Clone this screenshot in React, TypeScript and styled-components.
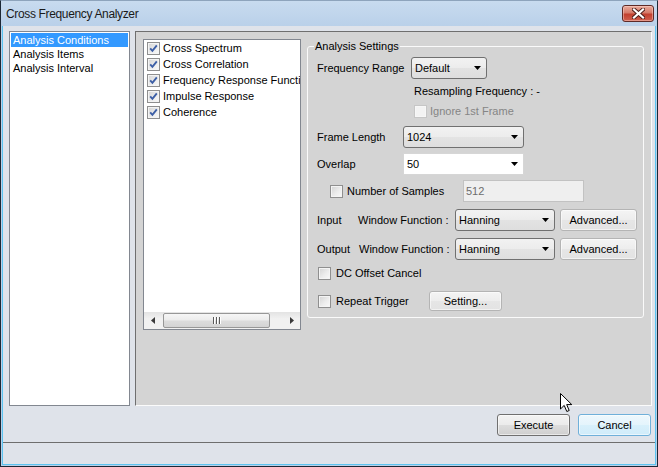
import React from 'react';
import styled, { createGlobalStyle } from 'styled-components';

const Global = createGlobalStyle`
  html, body { margin: 0; padding: 0; background: #fff; }
  body { font-family: "Liberation Sans", Arial, sans-serif; font-size: 11px; color: #000; }
  * { box-sizing: border-box; }
`;

const Window = styled.div`
  position: relative;
  width: 658px;
  height: 467px;
  border: 1px solid #1c2835;
  border-top-color: #8ea4bc;
  background: linear-gradient(#c8dbef, #b9d0e9 26px, #b9d0e9);
  display: flex;
  flex-direction: column;
  overflow: hidden;
`;

const TitleBar = styled.div`
  height: 25px;
  flex: none;
  display: flex;
  align-items: center;
  justify-content: space-between;
  padding: 0 3px 0 5px;
`;

const Title = styled.span`
  font-size: 12px;
  color: #1a1a1a;
  letter-spacing: -0.35px;
`;

const CloseButton = styled.div`
  width: 32px;
  height: 17px;
  border: 1px solid #5e2a27;
  border-radius: 3px;
  background: linear-gradient(#e9ab9c, #d67b6a 45%, #c2402f 55%, #d0604f);
  box-shadow: inset 0 0 0 1px rgba(255, 220, 210, 0.45);
  display: flex;
  align-items: center;
  justify-content: center;
`;

const Client = styled.div`
  flex: 1;
  margin: 0 1px 1px;
  border: 1px solid #5cc4f0;
  border-top: none;
  background: #dfe3ea;
  display: flex;
  flex-direction: column;
`;

const Main = styled.div`
  flex: none;
  height: 380px;
  display: flex;
  gap: 5px;
  padding: 5px 3px 0 6px;
`;

const NavList = styled.div`
  width: 121px;
  height: 375px;
  border: 1px solid #828790;
  background: #fff;
  padding: 1px;
`;

const NavItem = styled.div<{ $selected?: boolean }>`
  height: 14px;
  line-height: 14px;
  padding-left: 2px;
  white-space: nowrap;
  background: ${(p) => (p.$selected ? '#3399ff' : 'transparent')};
  color: ${(p) => (p.$selected ? '#fff' : '#000')};
`;

const Panel = styled.div`
  width: 517px;
  height: 375px;
  border: 1px solid;
  border-color: #6f6f6f #fbfbfb #fbfbfb #6f6f6f;
  background: #d4d4d4;
  display: flex;
  align-items: flex-start;
  gap: 6px;
  padding: 7px 0 0 7px;
`;

const CheckListBox = styled.div`
  width: 158px;
  height: 291px;
  border: 1px solid #828790;
  background: #fff;
  display: flex;
  flex-direction: column;
`;

const CheckItems = styled.div`
  flex: 1;
  overflow: hidden;
`;

const CheckItem = styled.div`
  height: 16px;
  display: flex;
  align-items: center;
  gap: 3px;
  padding-left: 3px;
  white-space: nowrap;
`;

const HScroll = styled.div`
  flex: none;
  height: 17px;
  display: flex;
  align-items: center;
  background: linear-gradient(#e3e3e3, #f1f1f1 40%, #f1f1f1);
`;

const ScrollArrow = styled.div`
  width: 17px;
  height: 17px;
  display: flex;
  align-items: center;
  justify-content: center;
  &:last-child { margin-left: auto; }
`;

const Thumb = styled.div`
  width: 107px;
  height: 15px;
  margin-left: 2px;
  border: 1px solid #979797;
  border-radius: 2px;
  background: linear-gradient(#f6f6f6, #ececec 45%, #dcdcdc 55%, #d4d4d4);
  display: flex;
  align-items: center;
  justify-content: center;
  gap: 2px;
`;

const Grip = styled.span`
  width: 1px;
  height: 7px;
  background: #5a5a5a;
  box-shadow: 1px 0 0 #fff;
`;

const GroupBox = styled.div`
  position: relative;
  margin-top: 7px;
  width: 337px;
  height: 272px;
  border: 1px solid #fafafa;
  border-radius: 3px;
`;

const Legend = styled.span`
  position: absolute;
  top: -8px;
  left: 6px;
  padding: 0 1px;
  line-height: 14px;
  background: #d4d4d4;
`;

const Row = styled.div<{ $mt: number; $h: number; $pl: number }>`
  display: flex;
  align-items: center;
  margin-top: ${(p) => p.$mt}px;
  height: ${(p) => p.$h}px;
  padding-left: ${(p) => p.$pl}px;
  white-space: nowrap;
`;

const Label = styled.span<{ $w?: number; $muted?: boolean }>`
  flex: none;
  width: ${(p) => (p.$w ? `${p.$w}px` : 'auto')};
  color: ${(p) => (p.$muted ? '#858585' : '#000')};
  white-space: nowrap;
`;

const CheckPair = styled.div<{ $gap: number }>`
  display: flex;
  align-items: center;
  gap: ${(p) => p.$gap}px;
`;

const Combo = styled.div<{ $w: number; $editable?: boolean }>`
  flex: none;
  width: ${(p) => p.$w}px;
  height: 22px;
  display: flex;
  align-items: center;
  justify-content: space-between;
  padding: 0 5px 0 3px;
  border: 1px solid ${(p) => (p.$editable ? '#d6d6d6' : '#707070')};
  border-radius: ${(p) => (p.$editable ? '0' : '3px')};
  background: ${(p) =>
    p.$editable ? '#fff' : 'linear-gradient(#f2f2f2, #ececec 50%, #e3e3e3 50%, #dedede)'};
`;

const TextBox = styled.div<{ $w: number }>`
  flex: none;
  width: ${(p) => p.$w}px;
  height: 22px;
  display: flex;
  align-items: center;
  padding-left: 2px;
  border: 1px solid #c2c2c2;
  background: #efefef;
  color: #6d6d6d;
`;

const PushButton = styled.div<{ $w: number; $h: number; $variant?: 'light' | 'default' | 'focus' }>`
  flex: none;
  width: ${(p) => p.$w}px;
  height: ${(p) => p.$h}px;
  display: flex;
  align-items: center;
  justify-content: center;
  border-radius: 3px;
  border: 1px solid
    ${(p) => (p.$variant === 'focus' ? '#6fb0da' : p.$variant === 'light' ? '#b4b4b4' : '#707070')};
  background: ${(p) =>
    p.$variant === 'focus'
      ? 'linear-gradient(#eef8fd, #e4f4fc 50%, #d8f0fb 50%, #d0ecfa)'
      : p.$variant === 'light'
      ? 'linear-gradient(#f4f4f4, #ededed 50%, #e6e6e6 50%, #e3e3e3)'
      : 'linear-gradient(#f3f3f3, #ebebeb 50%, #dddddd 50%, #cfcfcf)'};
  box-shadow: inset 0 0 0 1px rgba(255, 255, 255, 0.55);
`;

const Gap = styled.span<{ $w: number }>`
  flex: none;
  width: ${(p) => p.$w}px;
`;

const BottomBar = styled.div`
  flex: none;
  display: flex;
  justify-content: flex-end;
  gap: 8px;
  padding-right: 4px;
  margin-top: 8px;
`;

const Separator = styled.div`
  flex: none;
  margin-top: 6px;
  height: 1px;
  background: #6e6e6e;
`;

const StatusBar = styled.div`
  flex: 1;
`;

const Pointer = styled.svg`
  position: absolute;
  left: 559px;
  top: 392px;
`;

const Box = styled.span<{ $disabled?: boolean }>`
  flex: none;
  width: 13px;
  height: 13px;
  display: block;
  border: 1px solid ${(p) => (p.$disabled ? '#c6c6c6' : '#8f8f8f')};
  background: ${(p) =>
    p.$disabled ? '#f3f3f3' : 'linear-gradient(135deg, #d3d3d3 0%, #ececec 55%, #fafafa 100%)'};
  box-shadow: inset 0 0 0 1px ${(p) => (p.$disabled ? '#f7f7f7' : '#f4f4f4')};
`;

const CheckBox: React.FC<{ checked?: boolean; disabled?: boolean }> = ({ checked, disabled }) => (
  <Box $disabled={disabled}>
    {checked && (
      <svg width="11" height="11" viewBox="0 0 11 11" style={{ display: 'block' }}>
        <path d="M2.2 5.4 L4.4 7.8 L8.8 2.4" fill="none" stroke="#3d5fa6" strokeWidth="1.9" />
      </svg>
    )}
  </Box>
);

const DownArrow = () => (
  <svg width="7" height="4" viewBox="0 0 7 4">
    <path d="M0 0 H7 L3.5 4 Z" fill="#000" />
  </svg>
);

const App: React.FC = () => (
  <>
    <Global />
    <Window>
      <TitleBar>
        <Title>Cross Frequency Analyzer</Title>
        <CloseButton>
          <svg width="13" height="11" viewBox="0 0 13 11">
            <path d="M2 1.5 L11 9.5 M11 1.5 L2 9.5" stroke="#4a1c18" strokeWidth="4" strokeLinecap="square" />
            <path d="M2 1.5 L11 9.5 M11 1.5 L2 9.5" stroke="#fff" strokeWidth="2.2" strokeLinecap="square" />
          </svg>
        </CloseButton>
      </TitleBar>
      <Client>
        <Main>
          <NavList>
            <NavItem $selected>Analysis Conditions</NavItem>
            <NavItem>Analysis Items</NavItem>
            <NavItem>Analysis Interval</NavItem>
          </NavList>
          <Panel>
            <CheckListBox>
              <CheckItems>
                {['Cross Spectrum', 'Cross Correlation', 'Frequency Response Function', 'Impulse Response', 'Coherence'].map(
                  (t) => (
                    <CheckItem key={t}>
                      <CheckBox checked />
                      <span>{t}</span>
                    </CheckItem>
                  )
                )}
              </CheckItems>
              <HScroll>
                <ScrollArrow>
                  <svg width="4" height="7" viewBox="0 0 4 7">
                    <path d="M4 0 V7 L0 3.5 Z" fill="#3a3a3a" />
                  </svg>
                </ScrollArrow>
                <Thumb>
                  <Grip />
                  <Grip />
                  <Grip />
                </Thumb>
                <ScrollArrow>
                  <svg width="4" height="7" viewBox="0 0 4 7">
                    <path d="M0 0 V7 L4 3.5 Z" fill="#3a3a3a" />
                  </svg>
                </ScrollArrow>
              </HScroll>
            </CheckListBox>
            <GroupBox>
              <Legend>Analysis Settings</Legend>
              <Row $mt={10} $h={22} $pl={9}>
                <Label $w={94}>Frequency Range</Label>
                <Combo $w={76}>
                  <span>Default</span>
                  <DownArrow />
                </Combo>
              </Row>
              <Row $mt={5} $h={14} $pl={106}>
                <Label>Resampling Frequency : -</Label>
              </Row>
              <Row $mt={6} $h={14} $pl={106}>
                <CheckPair $gap={3}>
                  <CheckBox disabled />
                  <Label $muted>Ignore 1st Frame</Label>
                </CheckPair>
              </Row>
              <Row $mt={8} $h={22} $pl={9}>
                <Label $w={86}>Frame Length</Label>
                <Combo $w={121}>
                  <span>1024</span>
                  <DownArrow />
                </Combo>
              </Row>
              <Row $mt={5} $h={22} $pl={9}>
                <Label $w={86}>Overlap</Label>
                <Combo $w={121} $editable>
                  <span>50</span>
                  <DownArrow />
                </Combo>
              </Row>
              <Row $mt={5} $h={22} $pl={22}>
                <CheckPair $gap={4}>
                  <CheckBox />
                  <Label $w={116}>Number of Samples</Label>
                </CheckPair>
                <TextBox $w={121}>512</TextBox>
              </Row>
              <Row $mt={7} $h={22} $pl={9}>
                <Label $w={41}>Input</Label>
                <Label $w={97}>Window Function :</Label>
                <Combo $w={100}>
                  <span>Hanning</span>
                  <DownArrow />
                </Combo>
                <Gap $w={5} />
                <PushButton $w={77} $h={22} $variant="light">
                  Advanced...
                </PushButton>
              </Row>
              <Row $mt={7} $h={22} $pl={9}>
                <Label $w={42}>Output</Label>
                <Label $w={96}>Window Function :</Label>
                <Combo $w={100}>
                  <span>Hanning</span>
                  <DownArrow />
                </Combo>
                <Gap $w={5} />
                <PushButton $w={77} $h={22} $variant="light">
                  Advanced...
                </PushButton>
              </Row>
              <Row $mt={6} $h={14} $pl={10}>
                <CheckPair $gap={5}>
                  <CheckBox />
                  <Label>DC Offset Cancel</Label>
                </CheckPair>
              </Row>
              <Row $mt={11} $h={20} $pl={10}>
                <CheckPair $gap={5}>
                  <CheckBox />
                  <Label $w={93}>Repeat Trigger</Label>
                </CheckPair>
                <PushButton $w={73} $h={20} $variant="light">
                  Setting...
                </PushButton>
              </Row>
            </GroupBox>
          </Panel>
        </Main>
        <BottomBar>
          <PushButton $w={73} $h={22}>
            Execute
          </PushButton>
          <PushButton $w={73} $h={22} $variant="focus">
            Cancel
          </PushButton>
        </BottomBar>
        <Separator />
        <StatusBar />
      </Client>
      <Pointer width="13" height="20" viewBox="0 0 13 20">
        <path
          d="M0.5 0.5 L0.5 16 L4.2 12.4 L6.8 18.5 L9.2 17.5 L6.7 11.6 L11.8 11.6 Z"
          fill="#fff"
          stroke="#000"
          strokeWidth="1"
          strokeLinejoin="miter"
        />
      </Pointer>
    </Window>
  </>
);

export default App;
